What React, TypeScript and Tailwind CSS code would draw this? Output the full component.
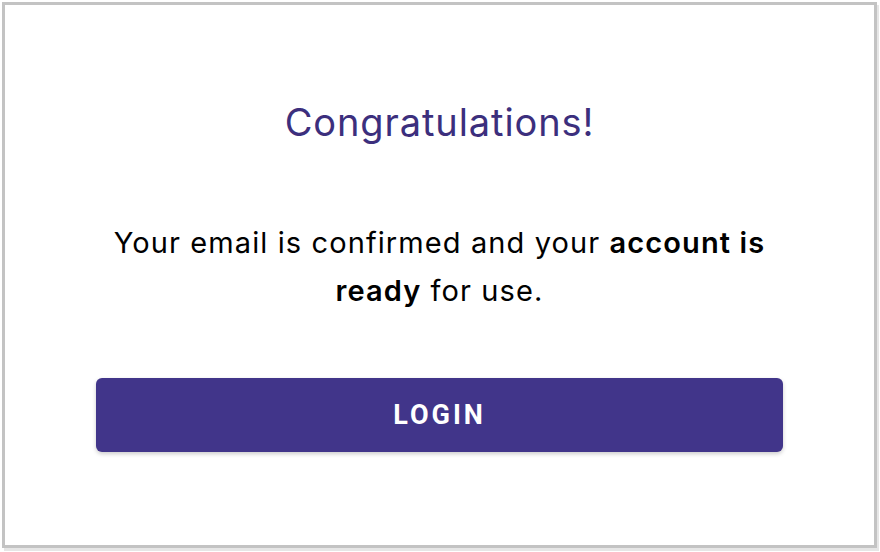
export default function App() {
  return (
    <div className="h-[552px] w-[880px] bg-white p-[2px]">
      <div
        className="flex h-[546px] w-[875px] flex-col items-center border-[3px] border-[#c3c3c3] px-[91px] pt-[94px] shadow-[2px_3px_0_0_#e6e6e6]"
        style={{ fontFamily: 'Inter, "Noto Sans", sans-serif' }}
      >
        <h1 className="text-[38px] leading-[46px] font-normal tracking-[0.9px] text-[#3c2f7d]">
          Congratulations!
        </h1>
        <p className="mt-[74px] text-center text-[29px] leading-[48px] tracking-[1.1px] whitespace-nowrap text-black">
          Your email is confirmed and your <b className="font-semibold">account is</b>
          <br />
          <b className="font-semibold">ready</b> for use.
        </p>
        <button
          className="mt-[63px] h-[74px] w-full rounded-[6px] bg-[#41358a] text-[27px] font-bold tracking-[3px] text-white shadow-[0_2px_4px_rgba(0,0,0,0.2)]"
          style={{ fontFamily: 'Roboto, "Noto Sans", sans-serif' }}
        >
          LOGIN
        </button>
      </div>
    </div>
  );
}
